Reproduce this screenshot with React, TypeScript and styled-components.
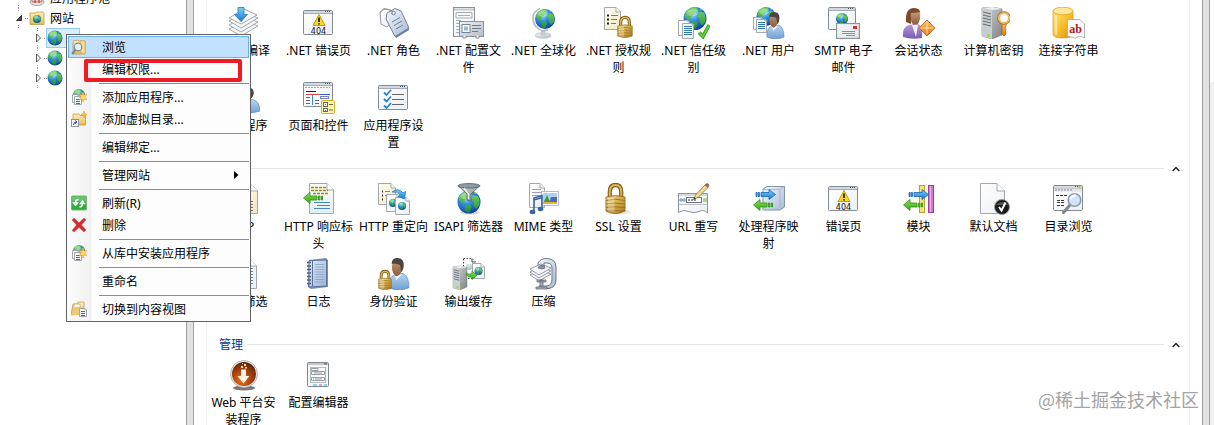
import React from "react";
import styled, { createGlobalStyle } from "styled-components";

const GlobalStyle = createGlobalStyle`
  * { box-sizing: border-box; }
  body {
    margin: 0;
    background: #fff;
    color: #000;
    font: 12px/17px "Noto Sans", "Noto Sans CJK SC", sans-serif;
    overflow: hidden;
  }
  button { font: inherit; color: inherit; }
`;

/* ---------- layout ---------- */

const Shell = styled.div`
  position: relative;
  display: grid;
  grid-template-columns: 186px 8px minmax(0, 1fr) 8px 4px;
  height: 100vh;
  overflow: hidden;
`;

const Splitter = styled.div`
  background: #e1e1e1;
  border: solid #a0a0a0;
  border-width: 0 1px;
`;

const ActionsEdge = styled.div`
  margin-top: 82px;
  background: #f0f0f0;
`;

const FeatureView = styled.main`
  padding: 0 12px;
  overflow: hidden;
`;

const FeaturePanel = styled.div`
  min-height: 100%;
  padding-top: 7px;
  box-shadow: inset 1px 0 #f0f0f0, inset -1px 0 #f0f0f0;
`;

const SectionHeader = styled.header`
  display: flex;
  align-items: center;
  gap: 4px;
  height: 26px;
  padding: 0 6px 3px 13px;
`;

const SectionTitle = styled.h2`
  margin: 0;
  font-size: 12px;
  font-weight: 400;
  color: #003399;
`;

const SectionRule = styled.div`
  flex: 1;
  height: 1px;
  background: #e2e4e6;
`;

const CollapseButton = styled.button`
  display: flex;
  align-items: center;
  justify-content: center;
  width: 16px;
  height: 16px;
  padding: 0;
  border: 0;
  background: none;
`;

const FeatureGrid = styled.ul`
  display: flex;
  flex-wrap: wrap;
  margin: 0;
  padding: 0 16px 0 0;
  list-style: none;
`;

const FeatureCell = styled.li`
  width: 75px;
  height: 75px;
`;

const FeatureLink = styled.a`
  display: flex;
  flex-direction: column;
  align-items: center;
  gap: 3px;
  color: #000;
  text-decoration: none;
`;

const FeatureLabel = styled.span`
  width: 70px;
  text-align: center;
`;

/* ---------- tree ---------- */

const Tree = styled.ul`
  margin: -12px 0 0;
  padding: 0;
  list-style: none;
  white-space: nowrap;
  overflow: hidden;
`;

const TreeRow = styled.li<{ $level: number }>`
  display: flex;
  align-items: center;
  height: 20px;
  padding-left: ${(p) => (p.$level === 0 ? 14 : 33)}px;
`;

const TreeLabel = styled.span`
  padding-left: 5px;
`;

const TreeNode = styled.span<{ $selected?: boolean }>`
  display: flex;
  align-items: center;
  width: 34px;
  height: 20px;
  margin-left: -2px;
  background: ${(p) => (p.$selected ? "#d9ecfd" : "none")};
  border: 1px solid ${(p) => (p.$selected ? "#99c9f5" : "transparent")};
`;

/* ---------- context menu ---------- */

const Menu = styled.ul`
  position: absolute;
  left: 66px;
  top: 34px;
  width: 185px;
  margin: 0;
  padding: 1px;
  list-style: none;
  border: 1px solid #646464;
  background: linear-gradient(90deg, #fcfcfc 0, #f1f1f1 24px, #fdfdfd 25px);
`;

const MenuButton = styled.button<{ $active?: boolean }>`
  display: flex;
  align-items: center;
  width: 100%;
  height: 22px;
  padding: 0 9px 0 2px;
  text-align: left;
  border: 1px solid ${(p) => (p.$active ? "#66b0ee" : "transparent")};
  background: ${(p) => (p.$active ? "#c2e0ff" : "none")};
`;

const MenuIconSlot = styled.span`
  display: flex;
  flex: none;
  width: 31px;
`;

const MenuLabel = styled.span`
  flex: 1;
`;

const MenuSeparator = styled.li`
  height: 6px;
  padding: 3px 0 2px 31px;
  &::before {
    content: "";
    display: block;
    height: 1px;
    background: #8c8c8c;
  }
`;

const HighlightFrame = styled.div`
  position: absolute;
  left: 84px;
  top: 59px;
  width: 158px;
  height: 23px;
  border: 4px solid #ed1c24;
  border-radius: 2px;
  pointer-events: none;
`;

const Watermark = styled.div`
  position: absolute;
  right: 15px;
  bottom: 12px;
  font: 400 18px/27px "Noto Sans CJK SC", sans-serif;
  color: #a3a3a3;
  text-shadow: 1px 1px 1px #fff;
`;

/* ---------- shared drawing parts ---------- */

const Paints = styled.svg`
  position: absolute;
  width: 0;
  height: 0;
`;

const lin = (id: string, stops: string[], diagonal = false) => (
  <linearGradient id={id} x1="0" y1="0" x2={diagonal ? "1" : "0"} y2="1">
    {stops.map((c, i) => (
      <stop key={i} offset={i / (stops.length - 1)} stopColor={c} />
    ))}
  </linearGradient>
);

const PaintDefs = () => (
  <Paints aria-hidden="true">
    <defs>
      <radialGradient id="sea" cx=".38" cy=".3" r=".75">
        <stop offset="0" stopColor="#a8e4ff" />
        <stop offset=".4" stopColor="#2f8fe6" />
        <stop offset="1" stopColor="#0b3a9c" />
      </radialGradient>
      <radialGradient id="copper" cx=".4" cy=".75" r=".8">
        <stop offset="0" stopColor="#e8741c" />
        <stop offset=".5" stopColor="#a8430c" />
        <stop offset="1" stopColor="#5a1f06" />
      </radialGradient>
      {lin("land", ["#7ddb62", "#1f8a3a"])}
      {lin("paper", ["#ffffff", "#eceff3"], true)}
      {lin("tan", ["#fffef6", "#f3e7c2"], true)}
      {lin("mint", ["#fffdf0", "#dff1f5"])}
      {lin("gold", ["#f2d98a", "#d6ac48", "#a87a20"], true)}
      {lin("amber", ["#ffe680", "#f9bf2d", "#d98a06"], true)}
      {lin("skin", ["#c49a74", "#8a5c3c"])}
      {lin("shirt", ["#b7d6f2", "#6f9fd3"])}
      {lin("violet", ["#b59ad6", "#7a5bb0"])}
      {lin("leaf", ["#8fe35a", "#2fa516"])}
      {lin("sky", ["#7fd0fb", "#1479cf"])}
      {lin("steel", ["#f2f4f6", "#b4bbc3"], true)}
      {lin("server", ["#d8dadc", "#7d8286"], true)}
      {lin("ice", ["#f6f9fd", "#a3b8d6"], true)}
      {lin("orange", ["#ffc46b", "#e8720c"])}
      {lin("book", ["#dce8f6", "#9db6d8"], true)}
      {lin("folder", ["#fdf0b8", "#e5bb56"])}
    </defs>
  </Paints>
);

const Globe = ({ x, y, r }: { x: number; y: number; r: number }) => (
  <g transform={`translate(${x} ${y}) scale(${r / 10})`}>
    <circle r="10" fill="url(#sea)" />
    <path
      d="M-7-7Q-3-10 1-9.5L3-7 0-5.500-1-3-4-1-4 2-7 0-9-2Q-9-5-7-7ZM-3 3 0 2 2 4 1 8-1 9.500Q-4 8-4 5ZM4-6 8-5Q10-1 9 3L6 6 4 3 4 0 2-2ZM4-9 7-7 5-7Z"
      fill="url(#land)"
    />
    <ellipse cx="-2" cy="-5" rx="5" ry="3" fill="#fff" opacity=".3" />
  </g>
);

type Box = { x: number; y: number; w: number; h: number };

const Doc = ({ x, y, w, h, fill = "url(#paper)", fold = 5, dash }: Box & { fill?: string; fold?: number; dash?: string }) => (
  <g stroke={dash ? "#444" : "#a3a8ae"} strokeWidth="1" strokeLinejoin="round">
    <path d={`M${x + 0.5} ${y + 0.5}H${x + w - fold}L${x + w - 0.5} ${y + fold}V${y + h - 0.5}H${x + 0.5}Z`} fill={fill} strokeDasharray={dash} />
    <path d={`M${x + w - fold} ${y + 0.5}V${y + fold}H${x + w - 0.5}`} fill="#fff" />
  </g>
);

const Lines = ({ x, y, w, n, gap = 2, color = "#3a6ea5" }: { x: number; y: number; w: number; n: number; gap?: number; color?: string }) => (
  <path d={Array.from({ length: n }, (_, i) => `M${x} ${y + i * gap + 0.5}h${w}`).join("")} stroke={color} fill="none" />
);

const Pane = ({ x, y, w, h }: Box) => (
  <g>
    <rect x={x + 0.5} y={y + 0.5} width={w - 1} height={h - 1} rx="1" fill="url(#paper)" stroke="#838b95" />
    <path d={`M${x + 1} ${y + 2}H${x + w - 1}`} stroke="#d3d9e1" strokeWidth="2" />
    <path d={`M${x + 1} ${y + 3.5}H${x + w - 1}`} stroke="#a4abb4" />
    <path d={`M${x + w - 8} ${y + 1.5}h1m1 0h1m1 0h1`} stroke="#4d5660" />
  </g>
);

const Lock = ({ x, y, w, h }: Box) => (
  <g transform={`translate(${x} ${y}) scale(${w / 22} ${h / 31})`}>
    <path d="M5 15V9Q5 2 11 2T17 9V15" fill="none" stroke="#7d5c18" strokeWidth="4.400" />
    <path d="M5 15V9Q5 2 11 2T17 9V15" fill="none" stroke="#d8b45a" strokeWidth="2" />
    <path d="M1 14Q11 11 21 14V28Q11 33 1 28Z" fill="url(#gold)" stroke="#8a6418" strokeWidth=".8" />
    <path d="M1 17.500Q11 15 21 17.500M1 21Q11 19 21 21M1 24.500Q11 23 21 24.500M1 28Q11 27.500 21 28" fill="none" stroke="#94701f" />
    <path d="M3 15.500Q7 14 10 14V29Q6 29 3 28Z" fill="#fff" opacity=".3" />
  </g>
);

const Person = ({ x, y, w, h }: Box) => (
  <g transform={`translate(${x} ${y}) scale(${w / 20} ${h / 27})`}>
    <path d="M1 25Q0 16 7 14L14 13Q20 15 20 25Q10 29 1 25Z" fill="url(#shirt)" stroke="#5585b8" strokeWidth=".6" />
    <path d="M6 14 8 19 13 14Z" fill="#eef5fb" />
    <path d="M4 6Q4 1 9 1T14 6Q14 11 11 14T6 14Q3 11 4 6Z" fill="url(#skin)" />
    <path d="M3.500 5Q3.500 0 9 0Q15 0 15 6Q15 10 12.500 12L11.500 6Q7 4 3.500 5Z" fill="#4a4543" />
  </g>
);

const BlueArrow = ({ x, y }: { x: number; y: number }) => (
  <path transform={`translate(${x} ${y})`} d="M0 3.500H1V7.500H0ZM2 3.500H3.500V7.500H2ZM5 3.500H13V.5L19.500 5.500 13 10.500V7.500H5Z" fill="url(#sky)" stroke="#1567b0" strokeWidth=".8" />
);

const GreenArrow = ({ x, y }: { x: number; y: number }) => (
  <path transform={`translate(${x} ${y})`} d="M19.500 4H18.500V8H19.500ZM17 4H15.500V8H17ZM14 4H7V.5L.5 6 7 11.500V8H14Z" fill="url(#leaf)" stroke="#2c9114" strokeWidth=".8" />
);

const Server = ({ x, y, w, h }: Box) => (
  <g transform={`translate(${x} ${y}) scale(${w / 20} ${h / 32})`}>
    <path d="M0 1 11 0 20 2 20 28 10 32 0 29Z" fill="url(#server)" stroke="#74797e" strokeWidth=".6" />
    <path d="M0 1 10 3 20 2 11 0Z" fill="#eceeef" />
    <path d="M10 3V32L0 29V1Z" fill="#c9cdd0" />
    <path d="M1 5 9 7M1 8 9 10M1 11 9 13M1 14 9 16M1 17 9 19" stroke="#6a7075" strokeWidth="1.200" />
    <rect x="5" y="27" width="3" height="3" fill="#8ee03a" />
  </g>
);

const Error404 = (
  <>
    <Pane x={1} y={3} w={30} h={25} />
    <path d="M17 7.500 23 18.500H11Z" fill="#fbd72b" stroke="#c79a10" strokeLinejoin="round" />
    <path d="M17 10.500V15M17 16.200V17.600" stroke="#111" strokeWidth="1.600" />
    <text x="16.500" y="26.500" textAnchor="middle" fontFamily="DejaVu Sans" fontSize="8" fill="#111">404</text>
  </>
);

const art: Record<string, React.ReactNode> = {
  compile: (
    <>
      {[10, 6, 2].map((d) => (
        <path key={d} d={`M2 ${12 + d} 18 ${4 + d} 31 ${9 + d} 14 ${19 + d}Z`} fill="url(#paper)" stroke="#8e9398" strokeWidth=".8" strokeLinejoin="round" />
      ))}
      <path d="M2 11 17 2 30 8 14 17Z" fill="#fbfbfc" stroke="#8e9398" strokeWidth=".8" />
      <path d="M11 .5H17V7.500H20.500L14 14.500 7.500 7.500H11Z" fill="url(#sky)" stroke="#1b78c2" strokeWidth=".8" />
    </>
  ),
  error: Error404,
  roles: (
    <>
      <path d="M3 5 7 1.500 14 3 15 15 10 20 4 17Z" fill="url(#paper)" stroke="#969da6" />
      <path d="M10 6 18 1.500 24 4 32 21 18 29.500 9 12Z" fill="url(#ice)" stroke="#75849b" strokeLinejoin="round" />
      <path d="M18 29.500 32 21 32 23 19 31Z" fill="#6c7e98" />
      <circle cx="16.500" cy="6" r="1.800" fill="#fff" stroke="#6e7887" />
      <path d="M16 6Q11 1 7 2.500T3 7" fill="none" stroke="#9aa0a8" />
      <path d="M15 15 23 10.500M17 18.500 25 14M19 22 26 18" stroke="#71809a" />
    </>
  ),
  config: (
    <>
      <rect x="1.500" y=".5" width="21" height="29" fill="url(#paper)" stroke="#8b9097" />
      <path d="M2 2.500H22" stroke="#c5cad1" strokeWidth="2" />
      <path d="M4 5.500H20V11H4ZM4 13.500H9M4 16.500H7M4 19.500H7M4 22.500H7M4 25.500H7M6 8.500H18" fill="none" stroke="#a8adb3" />
      <rect x="7.500" y="14.500" width="24" height="15" fill="url(#steel)" stroke="#8a929b" />
      <rect x="10" y="17.500" width="8" height="8" fill="#fff" stroke="#6f8399" />
      <rect x="12" y="19.500" width="4" height="4" fill="#9db9d3" />
      <path d="M20 18.500H29M20 21.500H29M20 24.500H26" stroke="#6d7c8c" />
      <path d="M11 28.500v2.500h3v-2.500M24 28.500v2.500h3v-2.500" fill="#fff" stroke="#8a9199" />
    </>
  ),
  globalize: (
    <>
      <ellipse cx="16" cy="28.500" rx="8" ry="2.800" fill="url(#steel)" stroke="#b4b8bd" strokeWidth=".6" />
      <path d="M14 24H18L18.500 28H13.500Z" fill="#c6cacf" />
      <path d="M13 1.500Q5 5 6 13T16 24L21 23" fill="none" stroke="#b9bdc2" strokeWidth="1.800" />
      <Globe x={18} y={12} r={10} />
    </>
  ),
  authorize: (
    <>
      <Doc x={2} y={0} w={17} h={23} fill="url(#tan)" />
      <path d="M5 8.500h2M5 12.500h2M5 16.500h2" stroke="#222" strokeWidth="2" />
      <path d="M9 8.500h7M9 12.500h6M9 16.500h5" stroke="#777" />
      <Lock x={15} y={9} w={16} h={22} />
    </>
  ),
  trust: (
    <>
      <Globe x={18} y={11.5} r={11.5} />
      <Doc x={1} y={13} w={12} h={16} fold={2} />
      <Doc x={5} y={16} w={12} h={16} fold={2} />
      <Lines x={7} y={19} w={8} n={5} color="#2f75a8" />
      <path d="M22 25.500 26 29.500 32 18" fill="none" stroke="#2e9a17" strokeWidth="3.600" />
      <path d="M22 25.500 26 29.500 32 18" fill="none" stroke="#62d23c" strokeWidth="1.800" />
    </>
  ),
  netUser: (
    <>
      <Globe x={14} y={9.5} r={9.5} />
      <Doc x={1} y={10} w={10} h={13} fold={2} />
      <Doc x={4} y={12} w={11} h={14} fold={2} />
      <Lines x={6} y={15} w={7} n={4} color="#2f75a8" />
      <Person x={14} y={5} w={18} h={27} />
    </>
  ),
  smtp: (
    <>
      <Pane x={1} y={0} w={28} h={23} />
      <Globe x={15} y={12} r={6} />
      <rect x="9.500" y="16.500" width="23" height="15" fill="url(#steel)" stroke="#8d949c" />
      <rect x="10.500" y="17.500" width="21" height="13" fill="#f4f5f6" opacity=".75" />
      <rect x="26" y="19" width="4" height="3" fill="#d2322a" />
      <path d="M15 24.500H28M15 26.500H28M19 28.500H28" stroke="#8c8f94" />
    </>
  ),
  session: (
    <>
      <path d="M1 30Q0 20 7 18L16 17Q21 19 20 31Q10 33 1 30Z" fill="url(#violet)" />
      <path d="M10 18 14 30 16 18Z" fill="#f3eef6" />
      <path d="M4 15Q3 1 12 1Q19 1 18 7L10 9 9 17Z" fill="#7a4a2b" />
      <path d="M9 6Q14 6 18 5Q19 12 16 17L11 18Q8 12 9 6Z" fill="url(#skin)" />
      <path d="M25 13 33 21 25 29 17 21Z" fill="url(#orange)" stroke="#fff" />
      <path d="M25 13 33 21 25 29 17 21Z" fill="none" stroke="#b5520a" strokeWidth=".8" />
      <path d="M25 15V27M19 21H31" stroke="#fff0c8" strokeWidth=".8" />
    </>
  ),
  machineKey: (
    <>
      <Server x={5} y={0} w={20} h={32} />
      <path d="M25 16V27L27 29 29 27V25L28 24 29 22.500 28 21 29 19V16Z" fill="url(#orange)" stroke="#a66a15" strokeWidth=".8" />
      <circle cx="27" cy="11" r="5" fill="none" stroke="#a66a15" strokeWidth="3.600" />
      <circle cx="27" cy="11" r="5" fill="#fff" stroke="#f3b95c" strokeWidth="2.200" />
    </>
  ),
  connection: (
    <>
      <path d="M1 4V27Q1 31 11 31T21 27V4Z" fill="url(#amber)" stroke="#d0900e" strokeWidth=".6" />
      <ellipse cx="11" cy="4" rx="10" ry="3.800" fill="#fce79b" stroke="#e0a320" strokeWidth=".8" />
      <path d="M4 8V28" stroke="#fff3b8" strokeWidth="2.500" opacity=".7" />
      <path d="M15.500 12.500H28L32.500 17V31L28 29 23 31 15.500 29Z" fill="#fdfdfd" stroke="#b3b3b3" />
      <text x="23.500" y="26" textAnchor="middle" fontFamily="Liberation Serif" fontWeight="700" fontSize="12" fill="#b3161b">ab</text>
    </>
  ),
  provider: <Person x={8} y={5} w={25} h={26} />,
  pages: (
    <>
      <Pane x={1} y={0} w={30} h={25} />
      <path d="M3 5.500H28" stroke="#a6abb2" strokeDasharray="2 1" />
      <path d="M4 9.500H14" stroke="#222" />
      <path d="M4 12.500H28" stroke="#d8453c" />
      <path d="M18 12.500H28" stroke="#3a62c4" />
      <path d="M10.500 13V23" stroke="#3a8ed0" />
      <path d="M4 15.500H8M4 18.500H8M4 21.500H8M13 18.500H17M13 21.500H17" stroke="#666" />
      <rect x="18.500" y="14.500" width="8" height="2" fill="#fff" stroke="#7a83c8" />
      <rect x="19.500" y="18.500" width="13" height="13" rx="1" fill="#fff3a8" stroke="#d6b22a" />
      <rect x="21.500" y="20.500" width="4" height="4" fill="#fff" stroke="#665" />
      <rect x="21.500" y="26.500" width="4" height="3" fill="#fff" stroke="#665" />
      <path d="M27 22.500H31M27 28H31M23.500 22v1M23.500 28v1" stroke="#665" />
    </>
  ),
  appSettings: (
    <>
      <Pane x={1} y={3} w={30} h={25} />
      <path d="M7 10.500 9.500 13 14 8M7 17 9.500 19.500 14 14.500M7 23.500 9.500 26 14 21" fill="none" stroke="#2683cf" strokeWidth="1.800" />
      <path d="M15 12.500H27M15 17.500H27M15 22.500H27" stroke="#666" />
    </>
  ),
  asp: (
    <>
      <Doc x={7} y={0} w={24} h={31} fill="url(#tan)" fold={8} />
      <Lines x={11} y={18} w={15} n={4} gap={3} color="#776f58" />
    </>
  ),
  response: (
    <>
      <Doc x={7} y={0} w={25} h={31} fill="url(#mint)" fold={7} />
      <path d="M9 4.500H24M9 7.500H26M11 10.500H26" stroke="#a1841b" strokeWidth="1.600" strokeDasharray="3 1" />
      <path d="M12 19.500H28M15 22.500H28M12 25.500H28" stroke="#4a86c6" />
      <GreenArrow x={1} y={9} />
    </>
  ),
  redirect: (
    <>
      <Doc x={1} y={0} w={18} h={22} fill="url(#tan)" />
      <path d="M5 8.500h1M5 12.500h1M5 16.500h1" stroke="#222" strokeWidth="2" />
      <path d="M8 8.500h5M8 12.500h3" stroke="#888" />
      <Doc x={9} y={11} w={14} h={18} fold={3} />
      <Globe x={16} y={20} r={4} />
      <Doc x={18} y={14} w={15} h={18} fold={4} />
      <Globe x={25} y={23} r={4} />
      <path d="M15 9Q21 4 26 10L28.500 8.500 27.500 16 21 13.500 23.500 12Q20 8 15 9Z" fill="url(#sky)" stroke="#1b78c2" strokeWidth=".8" />
    </>
  ),
  isapi: (
    <>
      <ellipse cx="18" cy="29.500" rx="10" ry="2" fill="#000" opacity=".15" />
      <Globe x={17} y={19} r={11.5} />
      <path d="M6 2.500 15 11V17L19 18.500V11L28 2.500Z" fill="url(#server)" stroke="#56616c" strokeWidth=".8" />
      <ellipse cx="17" cy="2.800" rx="11" ry="2.300" fill="#8d9aa6" stroke="#56616c" strokeWidth=".8" />
      <path d="M12 5 16.500 11V16" fill="none" stroke="#fff" strokeWidth="1.400" opacity=".8" />
    </>
  ),
  mime: (
    <>
      <Doc x={2} y={0} w={16} h={25} />
      <Lines x={5} y={6} w={9} n={3} gap={3} color="#9aa3ad" />
      <rect x="14.500" y="8.500" width="17" height="14" fill="#fff" stroke="#b8bdc4" />
      <rect x="16" y="10" width="14" height="11" fill="#a9d2f5" />
      <path d="M16 21 20 12 24 21Z" fill="#3c9a3a" />
      <path d="M22 21 24 14H30V21Z" fill="#5468b8" />
      <path d="M16 20H30" stroke="#e9b33a" strokeWidth="2" />
      <path d="M7 29V15L15 12.500V26M7 17 15 14.500" fill="none" stroke="#3a63ae" strokeWidth="1.600" />
      <ellipse cx="5.500" cy="29" rx="2.800" ry="2.200" fill="#3a63ae" />
      <ellipse cx="13.500" cy="26" rx="2.800" ry="2.200" fill="#3a63ae" />
    </>
  ),
  ssl: (
    <>
      <ellipse cx="17" cy="29" rx="12" ry="2.500" fill="#000" opacity=".1" />
      <Lock x={3} y={0} w={21} h={31} />
    </>
  ),
  rewrite: (
    <>
      <path d="M1.500 10.500H30.500V30Q27 26 22 28.500T12 28.500 1.500 29.500Z" fill="url(#paper)" stroke="#8d949c" />
      <path d="M2 12H30" stroke="#d5dae0" strokeWidth="2" />
      <path d="M2 21.500H30" stroke="#b9bfc6" />
      <circle cx="4" cy="17" r="1.200" fill="#fff" stroke="#4a8cc8" />
      <circle cx="7" cy="17" r="1.200" fill="#fff" stroke="#4a8cc8" />
      <rect x="9.500" y="14.500" width="15" height="5" fill="#fff" stroke="#6f757c" />
      <path d="M11 17H20" stroke="#222" strokeDasharray="2 1" />
      <path d="M27 15v4M29 15v4" stroke="#7ea63a" />
      <path d="M16.500 16.500 18.500 12 28 2 31 4.500 21 14.500Z" fill="#f5d98c" stroke="#8b7444" strokeWidth=".8" />
      <path d="M28 2Q30-.5 32 1.500L31 4.500Z" fill="#d8564e" stroke="#666" strokeWidth=".6" />
      <path d="M16.500 16.500 17.500 14 19 15.500Z" fill="#333" />
    </>
  ),
  handler: (
    <>
      <path d="M11 6 15 3.500H32.500V24L28 27H11Z" fill="url(#ice)" stroke="#8392a8" />
      <path d="M11 6.500H28V27M28 6.500 32 3.500" fill="none" stroke="#a9b8cd" />
      <BlueArrow x={4} y={6} />
      <GreenArrow x={1} y={16} />
    </>
  ),
  modules: (
    <>
      <rect x="17.500" y="2.500" width="5" height="27" fill="#f6e27a" stroke="#bf9f2c" />
      <rect x="26.500" y="2.500" width="5" height="27" fill="#d873d6" stroke="#9d3f9f" />
      <path d="M28.500 3V29" stroke="#f0b5ee" />
      <BlueArrow x={7} y={6} />
      <GreenArrow x={1} y={16} />
    </>
  ),
  defaultDoc: (
    <>
      <Doc x={3} y={0} w={25} h={31} fold={8} />
      <circle cx="25" cy="24" r="7.500" fill="#1a1a1a" stroke="#9a9a9a" />
      <path d="M18.500 22Q25 16 31.500 22" fill="#fff" opacity=".25" />
      <path d="M22 24 24.500 27.500 28.500 19.500" fill="none" stroke="#fff" strokeWidth="2" />
    </>
  ),
  browse: (
    <>
      <Pane x={1} y={2} w={30} h={26} />
      <path d="M2 7H30" stroke="#e0e3e7" strokeWidth="3" />
      <path d="M3 7H20" stroke="#8c9299" strokeDasharray="2 1" />
      <path d="M26.500 4h2" stroke="#d4b52a" strokeWidth="2" />
      <path d="M4 12.500H15M5 17.500H13M5 19.500H13M5 22.500H13" stroke="#333" strokeDasharray="3 1" />
      <path d="M18 22 11.500 29.500" stroke="#7f868e" strokeWidth="3" strokeLinecap="round" />
      <circle cx="22.500" cy="17" r="6.300" fill="#cfe4fa" stroke="#8f9aa8" strokeWidth="1.600" />
      <path d="M18.500 16Q20 12 24 12.500" fill="none" stroke="#fff" strokeWidth="2" />
    </>
  ),
  filter: (
    <>
      <Doc x={6} y={1} w={24} h={30} fold={7} />
      <Lines x={10} y={10} w={16} n={6} gap={3} color="#4a86c6" />
    </>
  ),
  log: (
    <>
      <path d="M7 2 24 0 26 2V29L9 31 6 29Z" fill="#7d92b2" />
      <path d="M7 2.500 24.500 2V28L7 29Z" fill="url(#book)" stroke="#56709a" />
      <path d="M10.500 3V28" stroke="#58739c" />
      <path d="M13 6.500H22M13 9H22M13 11.500H22M13 14H22M13 16.500H22M13 19H22M13 21.500H22M13 24H22" stroke="#8ba3c6" strokeWidth=".8" />
      <path d="M5 4.500H9M5 8H9M5 11.500H9M5 15H9M5 18.500H9M5 22H9M5 25.500H9" stroke="#4f5f78" strokeWidth="1.400" />
    </>
  ),
  authenticate: (
    <>
      <Person x={11} y={0} w={21} h={32} />
      <Lock x={1} y={12} w={14} h={20} />
    </>
  ),
  outputCache: (
    <>
      <Doc x={11} y={0} w={13} h={21} fold={4} dash="1.500 1.500" />
      <g opacity=".35">
        <Globe x={17} y={9} r={3} />
      </g>
      <Server x={1} y={8} w={14} h={24} />
      <Doc x={20} y={5} w={13} h={16} fold={4} />
      <Globe x={26.5} y={13} r={4} />
      <path d="M14 15Q17 17 20 15.500V13L25 17.500 20 21.500V19Q15 20 14 15Z" fill="url(#leaf)" stroke="#2c9114" strokeWidth=".7" />
    </>
  ),
  compress: (
    <>
      <path d="M11 5Q13 .5 20 .5 29 1 29 9V22Q29 29 22 30.500H12V28H20Q25 27 25 21V10Q25 5 20 5H17V8H11Z" fill="url(#ice)" stroke="#6d7785" />
      {[6, 3, 0].map((d) => (
        <path key={d} d={`M3 ${11 + d} 14 ${6 + d} 24 ${10 + d} 12 ${17 + d}Z`} fill="url(#paper)" stroke="#7d838b" strokeWidth=".8" />
      ))}
      <path d="M11 10Q12 7 15 7T18 10Q15 12 11 10Z" fill="#8a929c" stroke="#59616b" strokeWidth=".6" />
      <path d="M13 22H16V28H13ZM10 22H19V24H10ZM9 29H20V31H9Z" fill="#aab2bc" stroke="#59616b" strokeWidth=".7" />
    </>
  ),
  webPlatform: (
    <>
      <ellipse cx="17" cy="29" rx="11" ry="2.500" fill="#777" />
      <circle cx="17" cy="15" r="13.500" fill="#e6e6e6" stroke="#a9a9a9" strokeWidth=".8" />
      <circle cx="17" cy="15" r="12" fill="url(#copper)" />
      <path d="M14 10.500H19V17H22.500L16.500 24.500 10.500 17H14Z" fill="#fff6e8" />
      <path d="M14 7h2v2h-2zM17 5h2v2h-2zM18 8h2v1.500h-2zM15 4h1v1h-1z" fill="#ffd9ae" />
    </>
  ),
  configEditor: (
    <>
      <rect x="5.500" y="3.500" width="21" height="24" rx="1" fill="#f5f6f6" stroke="#7f868c" />
      <path d="M6 5H26" stroke="#c4c9ce" strokeWidth="2" />
      <path d="M22 5h3" stroke="#555" />
      <rect x="8.500" y="8.500" width="15" height="15" fill="#fff" stroke="#b4b9bd" />
      <path d="M9.500 11.500H16V9.500H9.500ZM9.500 12.500H22.500V15.500H9.500ZM9.500 18.500H22.500V21.500H9.500Z" fill="#fff" stroke="#989ea3" />
      <path d="M12 14H20M13 20H20" stroke="#999" />
      <path d="M11 20h1M11 26h4" stroke="#27b5c4" />
      <path d="M17 26h3" stroke="#c05ac0" />
      <path d="M22 26h3" stroke="#27b5c4" />
    </>
  ),
};

const FeatureIcon = ({ name }: { name: string }) => (
  <svg width="33" height="32" viewBox="0 0 33 32" aria-hidden="true">
    {art[name]}
  </svg>
);

const smallArt: Record<string, React.ReactNode> = {
  explore: (
    <>
      <path d="M2 2 7 1 8 2H14V15H2Z" fill="url(#folder)" stroke="#c79c3f" strokeWidth=".8" />
      <path d="M10 1.500 14 2V15L10 14Z" fill="#f9e08e" stroke="#c79c3f" strokeWidth=".6" />
      <circle cx="7" cy="8" r="3.800" fill="#e3eef6" stroke="#7c8792" strokeWidth="1.200" />
      <path d="M4.500 11 1 15" stroke="#7b858f" strokeWidth="2" />
    </>
  ),
  addApp: (
    <>
      <Globe x={8} y={6} r={6} />
      <Doc x={1} y={5} w={8} h={9} fold={2} />
      <Doc x={3} y={7} w={8} h={9} fold={2} />
      <Lines x={5} y={10} w={4} n={3} />
      <path d="M12 3 13 6 16 5 14 8 16 11 13 10 12 13 11 10 8 11 10 8 8 5 11 6Z" fill="#ffd766" stroke="#d8931e" strokeWidth=".5" />
    </>
  ),
  addDir: (
    <>
      <path d="M2 3H8L9 4.500H14.500V14H2Z" fill="url(#folder)" stroke="#c79c3f" strokeWidth=".8" />
      <rect x=".5" y="8.500" width="7" height="7" fill="#fff" stroke="#8d93a5" />
      <path d="M2.500 14Q2.500 11 5.500 11M4 9.500 6 11 4 12.800" fill="none" stroke="#2b3fa8" />
      <path d="M13 0 13.800 2.500 16 3.500 13.800 4.500 13 7 12 4.500 10 3.500 12 2.500Z" fill="#ffc13d" stroke="#e08f16" strokeWidth=".5" />
    </>
  ),
  refresh: (
    <>
      <rect x=".5" y="1" width="15" height="14" rx="1" fill="#2fae3a" stroke="#7cae7e" />
      <rect x="1" y="1.500" width="14" height="5" fill="#8ad48c" opacity=".6" />
      <path d="M7.500 4.500Q4.500 4.500 4.500 8M2.500 8H6.500L4.500 10.500ZM8.500 12Q11.500 12 11.500 8M9.500 8.500H13.500L11.500 6Z" fill="none" stroke="#fff" strokeWidth="1.400" />
    </>
  ),
  remove: (
    <path d="M1 3 3 1 8 5.800 13 1 15 2.500 10.500 8 15 13 13 15 8 10.500 3 15 1 13.500 5.500 8Z" fill="#d8282c" stroke="#b9686a" strokeWidth=".6" />
  ),
  switchView: (
    <>
      <path d="M0 14 2 3H6L7 1H13V13Z" fill="url(#folder)" stroke="#b99a56" strokeWidth=".8" />
      <path d="M3 3H9V13H3Z" fill="#fff7de" stroke="#c9b27a" strokeWidth=".8" />
      <path d="M0 14 4 6H12V14Z" fill="#ecca74" />
      <Doc x={8} y={7} w={8} h={9} fold={2} />
      <Lines x={10} y={10} w={4} n={3} />
    </>
  ),
  globe: <Globe x={8} y={8} r={7.5} />,
  sites: (
    <>
      <path d="M1 3H7L8 2H14L15 3V14.500H1Z" fill="url(#folder)" stroke="#c79c3f" strokeWidth=".8" />
      <Globe x={8} y={9} r={4} />
    </>
  ),
  pools: (
    <>
      <ellipse cx="8" cy="12" rx="7" ry="3.500" fill="#ececec" stroke="#8f8f8f" strokeWidth=".8" />
      <path d="M3 5H13V12H3Z" fill="#f0d0ce" stroke="#a55" strokeWidth=".8" />
      <path d="M6 7V13M10 7V13" stroke="#b22" />
    </>
  ),
};

const SmallIcon = ({ name }: { name: string }) => (
  <svg width="16" height="16" viewBox="0 0 16 16" aria-hidden="true">
    {smallArt[name]}
  </svg>
);

const Twisty = ({ open, dots = true }: { open?: boolean; dots?: boolean }) => (
  <svg width="15" height="20" viewBox="0 0 15 20" aria-hidden="true">
    {open ? (
      <path d="M7.500 7.500V12.500H2.500Z" fill="#505050" stroke="#333" strokeLinejoin="round" />
    ) : (
      dots && <path d="M3.500 6 7.500 10 3.500 14Z" fill="#fff" stroke="#555" />
    )}
    <path d="M4.500 0V4M4.500 17V20M11 10.500H15" stroke="#999" strokeDasharray="1 1" />
  </svg>
);

/* ---------- data ---------- */

type Feature = [icon: string, label: string];

const sections: { title?: string; items: Feature[] }[] = [
  {
    items: [
      ["compile", ".NET 编译"],
      ["error", ".NET 错误页"],
      ["roles", ".NET 角色"],
      ["config", ".NET 配置文件"],
      ["globalize", ".NET 全球化"],
      ["authorize", ".NET 授权规则"],
      ["trust", ".NET 信任级别"],
      ["netUser", ".NET 用户"],
      ["smtp", "SMTP 电子邮件"],
      ["session", "会话状态"],
      ["machineKey", "计算机密钥"],
      ["connection", "连接字符串"],
      ["provider", "提供程序"],
      ["pages", "页面和控件"],
      ["appSettings", "应用程序设置"],
    ],
  },
  {
    title: "IIS",
    items: [
      ["asp", "ASP"],
      ["response", "HTTP 响应标头"],
      ["redirect", "HTTP 重定向"],
      ["isapi", "ISAPI 筛选器"],
      ["mime", "MIME 类型"],
      ["ssl", "SSL 设置"],
      ["rewrite", "URL 重写"],
      ["handler", "处理程序映射"],
      ["error", "错误页"],
      ["modules", "模块"],
      ["defaultDoc", "默认文档"],
      ["browse", "目录浏览"],
      ["filter", "请求筛选"],
      ["log", "日志"],
      ["authenticate", "身份验证"],
      ["outputCache", "输出缓存"],
      ["compress", "压缩"],
    ],
  },
  {
    title: "管理",
    items: [
      ["webPlatform", "Web 平台安装程序"],
      ["configEditor", "配置编辑器"],
    ],
  },
];

type MenuEntry = { label: string; icon?: string; active?: boolean; submenu?: boolean } | null;

const menuEntries: MenuEntry[] = [
  { label: "浏览", icon: "explore", active: true },
  { label: "编辑权限..." },
  null,
  { label: "添加应用程序...", icon: "addApp" },
  { label: "添加虚拟目录...", icon: "addDir" },
  null,
  { label: "编辑绑定..." },
  null,
  { label: "管理网站", submenu: true },
  null,
  { label: "刷新(R)", icon: "refresh" },
  { label: "删除", icon: "remove" },
  null,
  { label: "从库中安装应用程序", icon: "addApp" },
  null,
  { label: "重命名" },
  null,
  { label: "切换到内容视图", icon: "switchView" },
];

/* ---------- views ---------- */

const SiteTree = () => (
  <Tree aria-label="连接">
    <TreeRow $level={0}>
      <Twisty dots={false} />
      <SmallIcon name="pools" />
      <TreeLabel>应用程序池</TreeLabel>
    </TreeRow>
    <TreeRow $level={0}>
      <Twisty open />
      <SmallIcon name="sites" />
      <TreeLabel>网站</TreeLabel>
    </TreeRow>
    {[0, 1, 2].map((i) => (
      <TreeRow key={i} $level={1}>
        <Twisty />
        <TreeNode $selected={i === 0}>
          <SmallIcon name="globe" />
        </TreeNode>
      </TreeRow>
    ))}
  </Tree>
);

const ContextMenu = () => (
  <Menu role="menu">
    {menuEntries.map((entry, i) =>
      entry === null ? (
        <MenuSeparator key={i} role="separator" />
      ) : (
        <li key={i} role="none">
          <MenuButton type="button" role="menuitem" $active={entry.active}>
            <MenuIconSlot>{entry.icon && <SmallIcon name={entry.icon} />}</MenuIconSlot>
            <MenuLabel>{entry.label}</MenuLabel>
            {entry.submenu && (
              <svg width="5" height="8" viewBox="0 0 5 8" aria-hidden="true">
                <path d="M0 0 4.500 4 0 8Z" fill="#000" />
              </svg>
            )}
          </MenuButton>
        </li>
      )
    )}
  </Menu>
);

const Section = ({ title, items }: { title?: string; items: Feature[] }) => (
  <section>
    {title && (
      <SectionHeader>
        <SectionTitle>{title}</SectionTitle>
        <SectionRule />
        <CollapseButton type="button" aria-label={`折叠 ${title}`}>
          <svg width="8" height="6" viewBox="0 0 8 6" aria-hidden="true">
            <path d="M.7 5 4 1.500 7.300 5" fill="none" stroke="#222" strokeWidth="1.500" />
          </svg>
        </CollapseButton>
      </SectionHeader>
    )}
    <FeatureGrid>
      {items.map(([icon, label]) => (
        <FeatureCell key={label}>
          <FeatureLink href="#">
            <FeatureIcon name={icon} />
            <FeatureLabel>{label}</FeatureLabel>
          </FeatureLink>
        </FeatureCell>
      ))}
    </FeatureGrid>
  </section>
);

export default function App() {
  return (
    <>
      <GlobalStyle />
      <PaintDefs />
      <Shell>
        <SiteTree />
        <Splitter />
        <FeatureView>
          <FeaturePanel>
            {sections.map((s, i) => (
              <Section key={i} {...s} />
            ))}
          </FeaturePanel>
        </FeatureView>
        <Splitter />
        <ActionsEdge />
        <ContextMenu />
        <HighlightFrame />
        <Watermark>@稀土掘金技术社区</Watermark>
      </Shell>
    </>
  );
}
